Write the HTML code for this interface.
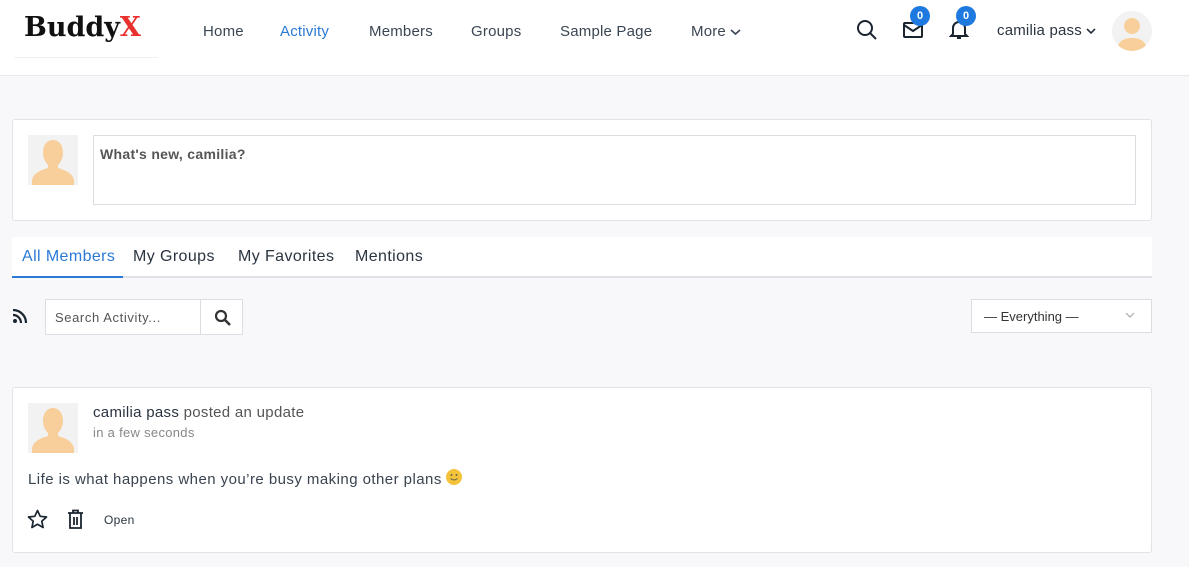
<!DOCTYPE html>
<html><head><style>
*{box-sizing:border-box;margin:0;padding:0}
body{width:1189px;height:567px;overflow:hidden;background:#f8f8fb;font-family:"Liberation Sans",sans-serif;color:#303a44;position:relative}
.a{position:absolute}
.hdr{left:0;top:0;width:1189px;height:76px;background:#fff;border-bottom:1px solid #e8e8ee}
.nav{top:22px;font-size:15px;color:#3a4654;letter-spacing:0.2px}
.box{background:#fff;border:1px solid #e2e2e8;border-radius:3px}
.av{background:#f2f2f2;overflow:hidden}
.badge{width:20px;height:20px;border-radius:50%;background:#1f7ae0;color:#fff;font-size:11px;font-weight:bold;text-align:center;line-height:20px}
.tab{top:248px;font-size:16px;color:#2a3440;letter-spacing:0.4px}
</style></head><body>
<div class="a hdr"></div>
<div class="a" style="left:24px;top:12px;font-family:'DejaVu Serif',serif;font-weight:bold;font-size:27px;color:#111">Buddy<span style="color:#e8312f">X</span></div>
<div class="a" style="left:14px;top:57px;width:144px;height:1px;background:#f0f0f0"></div>
<div class="a nav" style="left:203px;top:23px">Home</div>
<div class="a nav" style="left:280px;top:23px;color:#2a7ad5">Activity</div>
<div class="a nav" style="left:369px;top:23px">Members</div>
<div class="a nav" style="left:471px;top:23px">Groups</div>
<div class="a nav" style="left:560px;top:23px">Sample Page</div>
<div class="a nav" style="left:691px;top:23px">More <svg width="11" height="8" viewBox="0 0 11 8"><path d="M1 2l4.5 4 4.5-4" fill="none" stroke="#3a4654" stroke-width="1.6"/></svg></div>
<svg class="a" style="left:856px;top:19px" width="22" height="22" viewBox="0 0 22 22"><circle cx="9" cy="9" r="7" fill="none" stroke="#1a2530" stroke-width="2"/><path d="M14 14l6 6" stroke="#1a2530" stroke-width="2"/></svg>
<svg class="a" style="left:903px;top:21px" width="20" height="17" viewBox="0 0 20 17"><rect x="1" y="2" width="18" height="14" rx="1" fill="none" stroke="#1a2530" stroke-width="2"/><path d="M1 4l9 6 9-6" fill="none" stroke="#1a2530" stroke-width="2"/></svg>
<div class="a badge" style="left:910px;top:6px">0</div>
<svg class="a" style="left:949px;top:18px" width="20" height="22" viewBox="0 0 20 22"><path d="M4 16V10a6 6 0 0 1 12 0v6l2 2H2z" fill="none" stroke="#1a2530" stroke-width="2"/><path d="M8 20h4" stroke="#1a2530" stroke-width="2"/></svg>
<div class="a badge" style="left:956px;top:6px">0</div>
<div class="a" style="left:997px;top:22px;font-size:15px;color:#2a3440;letter-spacing:0.2px">camilia pass <svg width="10" height="8" viewBox="0 0 10 8"><path d="M1 2l4 4 4-4" fill="none" stroke="#2a3440" stroke-width="1.6"/></svg></div>
<div class="a av" style="left:1112px;top:11px;width:40px;height:40px;border-radius:50%"><svg width="40" height="40" viewBox="0 0 40 40"><circle cx="20" cy="15" r="8" fill="#f8cf9b"/><path d="M4 40c2-10 8-13 16-13s14 3 16 13z" fill="#f8cf9b"/></svg></div>

<div class="a box" style="left:12px;top:119px;width:1140px;height:102px"></div>
<div class="a av" style="left:28px;top:135px;width:50px;height:50px"><svg width="50" height="50" viewBox="0 0 50 50"><path d="M15 18c0-9 5-13 10-13s10 4 10 13c0 6-3 10-5 12l0 3c6 2 14 4 16 12v5H4v-5c2-8 10-10 16-12l0-3c-2-2-5-6-5-12z" fill="#f8cf9b"/></svg></div>
<div class="a" style="left:93px;top:135px;width:1043px;height:70px;border:1px solid #dcdce2;background:#fff;padding:10px 6px;font-weight:bold;font-size:14px;color:#555;letter-spacing:0.3px">What's new, camilia?</div>

<div class="a" style="left:12px;top:237px;width:1140px;height:41px;background:#fff;border-bottom:2px solid #e2e2e8"></div>
<div class="a tab" style="left:22px;color:#2a7ad5">All Members</div>
<div class="a" style="left:12px;top:276px;width:111px;height:2px;background:#2a7ad5"></div>
<div class="a tab" style="left:133px">My Groups</div>
<div class="a tab" style="left:238px">My Favorites</div>
<div class="a tab" style="left:355px">Mentions</div>

<svg class="a" style="left:13px;top:309px" width="14" height="14" viewBox="0 0 14 14"><circle cx="2" cy="12" r="2" fill="#1a2530"/><path d="M0 6a8 8 0 0 1 8 8M0 1a13 13 0 0 1 13 13" fill="none" stroke="#1a2530" stroke-width="2.2"/></svg>
<div class="a" style="left:45px;top:299px;width:198px;height:36px;background:#fff;border:1px solid #dcdce2"></div>
<div class="a" style="left:200px;top:299px;width:1px;height:36px;background:#dcdce2"></div>
<div class="a" style="left:55px;top:310px;font-size:13px;color:#555;letter-spacing:0.6px">Search Activity...</div>
<svg class="a" style="left:214px;top:309px" width="17" height="17" viewBox="0 0 17 17"><circle cx="7" cy="7" r="5" fill="none" stroke="#333" stroke-width="2.2"/><path d="M11 11l5 5" stroke="#333" stroke-width="2.6"/></svg>
<div class="a" style="left:971px;top:299px;width:181px;height:34px;background:#fff;border:1px solid #dcdce2;font-size:13px;color:#333;padding:9px 12px">— Everything —</div>
<svg class="a" style="left:1125px;top:312px" width="10" height="7" viewBox="0 0 10 7"><path d="M1 1l4 4 4-4" fill="none" stroke="#aaa" stroke-width="1.2"/></svg>

<div class="a box" style="left:12px;top:387px;width:1140px;height:166px"></div>
<div class="a av" style="left:28px;top:403px;width:50px;height:50px"><svg width="50" height="50" viewBox="0 0 50 50"><path d="M15 18c0-9 5-13 10-13s10 4 10 13c0 6-3 10-5 12l0 3c6 2 14 4 16 12v5H4v-5c2-8 10-10 16-12l0-3c-2-2-5-6-5-12z" fill="#f8cf9b"/></svg></div>
<div class="a" style="left:93px;top:404px;font-size:15px;color:#555;letter-spacing:0.3px"><span style="color:#2a3440">camilia pass</span> posted an update</div>
<div class="a" style="left:93px;top:425px;font-size:13px;color:#888;letter-spacing:0.3px">in a few seconds</div>
<div class="a" style="left:28px;top:469px;font-size:15px;color:#3a4450;letter-spacing:0.45px;white-space:nowrap">Life is what happens when you’re busy making other plans <svg width="16" height="16" viewBox="0 0 16 16" style="vertical-align:-1px"><circle cx="8" cy="8" r="8" fill="#f5c33b"/><circle cx="5.5" cy="6" r="1" fill="#664"/><circle cx="10.5" cy="6" r="1" fill="#664"/><path d="M4.5 9.5q3.5 3 7 0" fill="none" stroke="#664" stroke-width="1"/></svg></div>
<svg class="a" style="left:27px;top:509px" width="21" height="20" viewBox="0 0 21 20"><path d="M10.5 1.5l2.7 5.8 6.3.7-4.7 4.3 1.3 6.2-5.6-3.2-5.6 3.2 1.3-6.2L1.5 8l6.3-.7z" fill="none" stroke="#1a2530" stroke-width="1.7" stroke-linejoin="round"/></svg>
<svg class="a" style="left:67px;top:509px" width="17" height="20" viewBox="0 0 17 20"><path d="M1 4h15M6 4V1.5h5V4M3 4v15h11V4M7 8v8M10 8v8" fill="none" stroke="#1a2530" stroke-width="1.8"/></svg>
<div class="a" style="left:104px;top:513px;font-size:12px;color:#2a3440;letter-spacing:0.3px">Open</div>
</body></html>
